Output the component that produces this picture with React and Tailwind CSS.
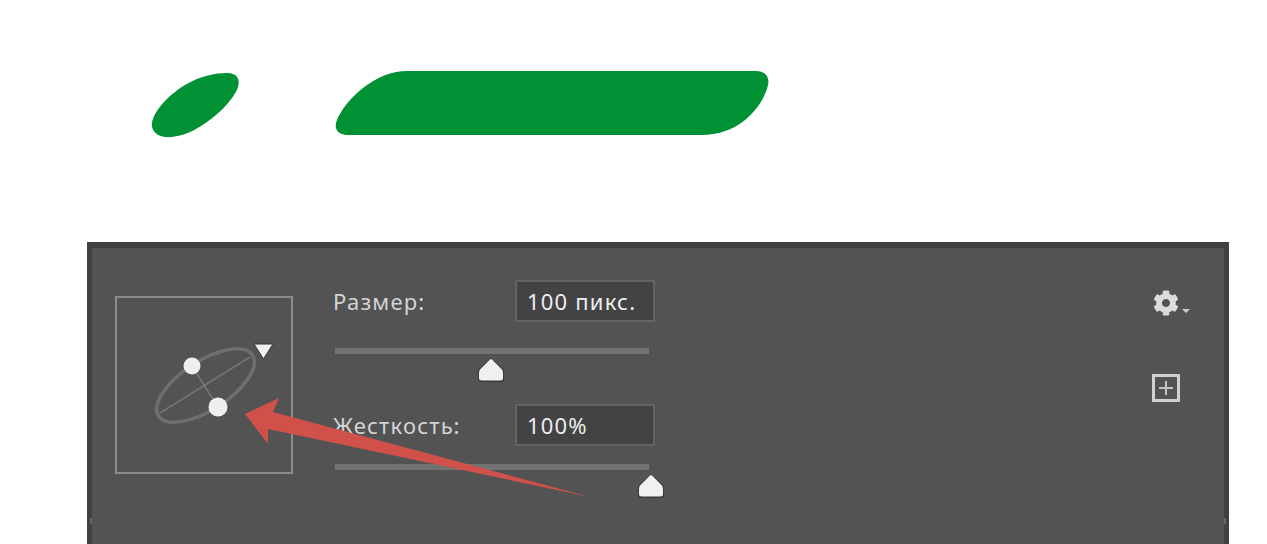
import { FaCog } from "react-icons/fa";

const FONT = "font-['Noto_Sans','Open_Sans',sans-serif]";

// Photoshop-like slider: track with a "house" shaped thumb under it
function Slider({ value, className }) {
  return (
    <div className={`relative ml-[2px] h-[6px] w-[314px] bg-[#727272] ${className}`}>
      <svg
        className="absolute top-[9px] -ml-[14px]"
        style={{ left: `${value}%` }}
        width="28"
        height="26"
        viewBox="0 0 28 26"
      >
        <path
          d="M14 1 L26 12 Q27 13 27 15 L27 22 Q27 25 24 25 L4 25 Q1 25 1 22 L1 15 Q1 13 2 12 Z"
          fill="#3a3a3a"
        />
        <path
          d="M14 2 Q15 2 16 3.5 L25 12.5 Q26 13.5 26 16 L26 21 Q26 23.5 23.5 23.5 L4.5 23.5 Q2 23.5 2 21 L2 16 Q2 13.5 3 12.5 L12 3.5 Q13 2 14 2 Z"
          fill="#f0f0f0"
        />
      </svg>
    </div>
  );
}

function Field({ label, value }) {
  return (
    <div className="flex items-center tracking-[1.2px]">
      <div className="w-[182px] text-[22px] leading-none text-[#d4d4d4]">{label}</div>
      <div className="flex h-[42px] w-[140px] items-center border-2 border-[#636363] bg-[#434343] pl-[10px] text-[22px] leading-none text-[#eeeeee]">
        {value}
      </div>
    </div>
  );
}

function BrushPreview() {
  return (
    <div className="mt-[48px] h-[178px] w-[178px] border-2 border-[#8c8c8c]">
      <svg className="block" width="174" height="174" viewBox="117 298 174 174">
        <ellipse
          cx="205.5"
          cy="385.5"
          rx="56"
          ry="24.5"
          transform="rotate(-33 205.5 385.5)"
          fill="none"
          stroke="#6f6f6f"
          strokeWidth="3.5"
        />
        <line x1="160" y1="413" x2="250" y2="357" stroke="#757575" strokeWidth="1.5" />
        <line x1="192" y1="366" x2="218" y2="407" stroke="#757575" strokeWidth="1.5" />
        <circle cx="192" cy="366" r="8.5" fill="#efefef" />
        <circle cx="218" cy="407" r="9.5" fill="#efefef" />
        <path d="M254 344 L273 344 L263.5 359 Z" fill="#efefef" stroke="#333333" strokeWidth="1" />
      </svg>
    </div>
  );
}

export default function App() {
  return (
    <div className={`relative h-[544px] w-[1267px] overflow-hidden bg-white ${FONT}`}>
      {/* brush strokes */}
      <div className="h-[242px]">
        <svg className="block" width="1267" height="242" viewBox="0 0 1267 242">
          <path
            d="M227 73 C238 73 240 80 238 87 C233 102 210 123 190 132 C172 140 155 139 152 127 C150 116 165 97 185 85 C200 76 215 73 227 73 Z"
            fill="#009135"
          />
          <path
            d="M407 71 L756 71 C765 71 770 77 768 85 C765 100 745 135 701 135 L349 135 C339 135 333 130 337 120 C345 100 375 71 407 71 Z"
            fill="#009135"
          />
        </svg>
      </div>

      {/* brush settings panel */}
      <div className="relative ml-[87px] flex h-[302px] w-[1142px] border-x-[5px] border-t-[6px] border-[#404040] bg-[#535353] pl-[23px]">
        <BrushPreview />

        <div className="ml-[40px] mt-[32px]">
          <Field label="Размер:" value="100 пикс." />
          <Slider value={49.7} className="mt-[26px] mb-[50px]" />
          <Field label="Жесткость:" value="100%" />
          <Slider value={100.6} className="mt-[18px]" />
        </div>

        <div className="ml-auto mr-[32px] mt-[42px] flex w-[40px] flex-col">
          <div className="ml-[1px] flex items-end">
            <FaCog className="h-[26px] w-[26px] text-[#dcdcdc]" />
            <svg className="mb-[3px] ml-[3px]" width="8" height="4" viewBox="0 0 8 4">
              <path d="M0 0 L8 0 L4 4 Z" fill="#cfcfcf" />
            </svg>
          </div>
          <div className="mt-[58px] flex h-[28px] w-[28px] items-center justify-center border-[3px] border-[#d0d0d0]">
            <svg width="14" height="14" viewBox="0 0 14 14">
              <path d="M7 0 V14 M0 7 H14" stroke="#c4c4c4" strokeWidth="2" />
            </svg>
          </div>
        </div>

        {/* small resize nubs on the side borders */}
        <div className="absolute -left-[2px] top-[270px] h-[6px] w-[2px] bg-[#666666]" />
        <div className="absolute -right-[2px] top-[270px] h-[6px] w-[2px] bg-[#666666]" />
      </div>

      {/* red annotation arrow */}
      <svg className="pointer-events-none absolute left-0 top-0" width="1267" height="544" viewBox="0 0 1267 544">
        <path d="M245 414 L279 398 L273 412 L590 497 L268 429 L268 444 Z" fill="#d0514a" />
      </svg>
    </div>
  );
}
